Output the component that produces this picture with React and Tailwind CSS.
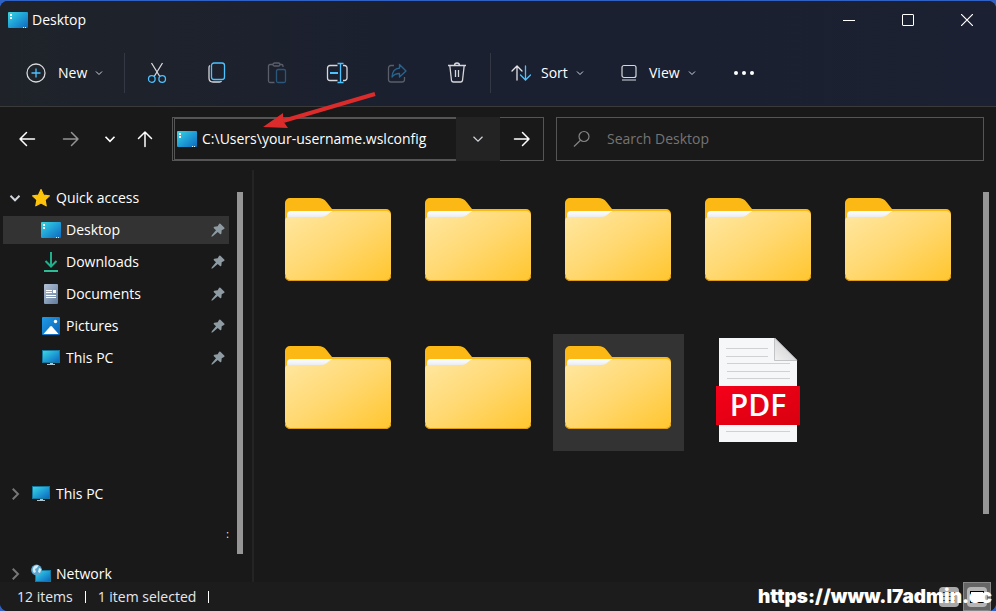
import React from 'react';

/* ---------- Icons ---------- */

function DesktopIcon() {
  return (
    <svg width="20" height="16" viewBox="0 0 20 16" className="shrink-0" aria-hidden="true">
      <defs>
        <linearGradient id="desk" x1="0" y1="0" x2="1" y2="1">
          <stop offset="0" stopColor="#3ad6e0" />
          <stop offset="0.5" stopColor="#1f9fd6" />
          <stop offset="1" stopColor="#0f68bd" />
        </linearGradient>
      </defs>
      <rect width="20" height="16" rx="1" fill="url(#desk)" />
      <path d="M2 2h2v2H2zM2 5h2v2H2z" fill="#fff" />
      <path d="M15 15h1v1h-1zM17 15h1v1h-1z" fill="#d5effa" />
    </svg>
  );
}

function PcIcon() {
  return (
    <svg width="20" height="18" viewBox="0 0 20 18" className="shrink-0" aria-hidden="true">
      <rect x="1" y="1" width="18" height="13" fill="#15779b" />
      <rect x="2" y="2" width="16" height="11" fill="url(#desk)" />
      <path d="M9 14h3v1h2v1H6v-1h3z" fill="#b9c3c9" />
    </svg>
  );
}

function StarIcon() {
  return (
    <svg width="20" height="20" viewBox="0 0 20 20" className="shrink-0" aria-hidden="true">
      <path
        d="M10 1.6 12.5 7l5.9.8-4.3 4.1 1.1 5.9L10 15l-5.2 2.8 1.1-5.9L1.6 7.8 7.5 7z"
        fill="#fdc40a"
        stroke="#fdc40a"
        strokeWidth="1.2"
        strokeLinejoin="round"
      />
    </svg>
  );
}

function DownloadIcon() {
  return (
    <svg width="20" height="20" viewBox="0 0 20 20" className="shrink-0" fill="none" strokeWidth="2" aria-hidden="true">
      <path d="M10 0v14M4.500 9 10 14.500 15.500 9" stroke="#22b08c" />
      <path d="M3 19h14" stroke="#2dbd94" />
    </svg>
  );
}

function DocumentIcon() {
  return (
    <svg width="20" height="20" viewBox="0 0 20 20" className="shrink-0" aria-hidden="true">
      <defs>
        <linearGradient id="doc" x1="0" y1="0" x2="1" y2="1">
          <stop offset="0" stopColor="#b4c2d6" />
          <stop offset="1" stopColor="#607b9d" />
        </linearGradient>
      </defs>
      <rect x="3" width="14" height="20" rx="1" fill="url(#doc)" />
      <path d="M5 6h6v1H5zM5 8h6v1H5zM12 6h3v3h-3zM5 11h10v1H5zM5 13h10v1H5z" fill="#fff" />
    </svg>
  );
}

function PictureIcon() {
  return (
    <svg width="20" height="20" viewBox="0 0 20 20" className="shrink-0" aria-hidden="true">
      <defs>
        <linearGradient id="pic" x1="0" y1="0" x2="1" y2="1">
          <stop offset="0" stopColor="#1f9be8" />
          <stop offset="1" stopColor="#0b62b5" />
        </linearGradient>
      </defs>
      <rect x="1" y="1" width="18" height="18" rx="1" fill="url(#pic)" />
      <path d="m2.500 18 6.700-7.600a1.200 1.200 0 0 1 1.700 0l6.700 7.600z" fill="#fff" />
      <circle cx="14.500" cy="5.500" r="1.700" fill="#fff" />
    </svg>
  );
}

function NetworkIcon() {
  return (
    <svg width="20" height="20" viewBox="0 0 20 20" className="shrink-0" aria-hidden="true">
      <rect x="4" y="6" width="16" height="12" fill="#15779b" />
      <rect x="5" y="7" width="14" height="10" fill="url(#desk)" />
      <path d="M11 18h2v2h-2z" fill="#c9d1d6" />
      <circle cx="5.500" cy="6" r="5.400" fill="#5aa6cf" />
      <path d="M2 4c1.500-3 4-3 5.500-2.500L6 4 4 5l1 3-2 1C1.500 7.500 1.500 5.500 2 4zM8 4l2.500 1L9 9 7 8z" fill="#d6edf8" />
    </svg>
  );
}

function PinIcon() {
  return (
    <svg width="14" height="14" viewBox="0 0 14 14" className="shrink-0" aria-hidden="true">
      <path d="M8 .9a.9.9 0 0 1 1.400-.1l3.800 3.800c.5.500.3 1.200-.2 1.400L10.700 7.300l-.3 3.200c-.1.700-.9 1-1.400.5L6.700 8.900 1.800 13.200.4 13.700l.4-1.400L5 7.300 2.900 5.200c-.5-.5-.2-1.300.5-1.400l3.300-.5z" fill="#8f9ba3" />
    </svg>
  );
}

function Chevron({ className = 'h-2 w-2', stroke = 1, d = 'M1 2.500 4 5.500 7 2.500' }) {
  return (
    <svg viewBox="0 0 8 8" className={`shrink-0 ${className}`} fill="none" stroke="currentColor" strokeWidth={stroke} aria-hidden="true">
      <path d={d} />
    </svg>
  );
}

function Arrow({ rotate = '' }) {
  return (
    <svg width="18" height="18" viewBox="0 0 18 18" className={rotate} fill="none" stroke="currentColor" strokeWidth="1.500" strokeLinecap="round" strokeLinejoin="round" aria-hidden="true">
      <path d="M2 9h14.500M8.500 2.500 2 9l6.500 6.500" />
    </svg>
  );
}

const tools = [
  {
    label: 'Cut',
    icon: (
      <>
        <path d="M5.500 1l8.300 13.500M16.500 1 8.200 14.500" stroke="#d6d8dc" />
        <circle cx="5.800" cy="17" r="3.300" stroke="#4cc2ff" />
        <circle cx="16.200" cy="17" r="3.300" stroke="#4cc2ff" />
      </>
    ),
  },
  {
    label: 'Copy',
    icon: (
      <>
        <path d="M4 3.500c-.8.500-1 1.200-1 2V16c0 2.500 1.500 4 4 4h6.500c1 0 1.700-.4 2-1" stroke="#d6d8dc" />
        <rect x="5.500" y="1" width="13" height="16.500" rx="2.500" stroke="#4cc2ff" />
      </>
    ),
  },
  {
    label: 'Paste',
    icon: (
      <>
        <path d="M7 2.500H4A1.500 1.500 0 0 0 2.500 4v15A1.500 1.500 0 0 0 4 20.500h4.500M13.500 2.500h2A1.500 1.500 0 0 1 17 4v1" stroke="#5a5e69" />
        <rect x="7" y="1" width="7" height="3" rx="1.500" stroke="#5a5e69" />
        <rect x="10.500" y="7.500" width="9" height="13" rx="1.500" stroke="#29587a" />
      </>
    ),
  },
  {
    label: 'Rename',
    icon: (
      <>
        <path d="M11.500 3.500H4A2.500 2.500 0 0 0 1.500 6v10A2.500 2.500 0 0 0 4 18.500h7.500M17 3.500h1.500A2.500 2.500 0 0 1 21 6v10a2.500 2.500 0 0 1-2.500 2.500H17" stroke="#d6d8dc" />
        <path d="M4 11h8" stroke="#4cc2ff" strokeWidth="2" />
        <path d="M14.500 1.500v19M11.500 1.500h6M11.500 20.500h6" stroke="#4cc2ff" />
      </>
    ),
  },
  {
    label: 'Share',
    icon: (
      <>
        <path d="M8 3.500H5A2.500 2.500 0 0 0 2.500 6v11.500A2.500 2.500 0 0 0 5 20h11a2.500 2.500 0 0 0 2.500-2.500V15" stroke="#5a5e69" />
        <path d="M13.500 2.500 20 9l-6.500 6v-3.500c-3.500 0-5.500.8-7.500 3.500.3-5 3-8.500 7.500-8.800z" stroke="#29648c" strokeLinejoin="round" />
      </>
    ),
  },
  {
    label: 'Delete',
    icon: (
      <>
        <path d="M2 3.500h18M3.800 3.500 5.500 18.500A2 2 0 0 0 7.500 20h7a2 2 0 0 0 2-1.500L18.200 3.500M8.500 3.500a2.500 2.500 0 0 1 5 0M9.500 8v7M12.500 8v7" stroke="#d6d8dc" />
      </>
    ),
  },
];

function Folder() {
  return (
    <svg width="106" height="84" viewBox="0 0 106 84" aria-hidden="true">
      <defs>
        <linearGradient id="front" x1="0" y1="0" x2="1" y2="1">
          <stop offset="0" stopColor="#ffe8a3" />
          <stop offset="0.5" stopColor="#ffd870" />
          <stop offset="1" stopColor="#ffc62f" />
        </linearGradient>
        <linearGradient id="paper" x1="0" y1="0" x2="0" y2="1">
          <stop offset="0" stopColor="#ffffff" />
          <stop offset="1" stopColor="#dfe3ea" />
        </linearGradient>
      </defs>
      <path d="M0 5a5 5 0 0 1 5-5h28c4 0 6 1 8.500 4L47 11h54a5 5 0 0 1 5 5v61a5 5 0 0 1-5 6H5a5 5 0 0 1-5-6z" fill="#fcb916" />
      <path d="M2 22v-5a4 4 0 0 1 4-4h42l-8 8z" fill="url(#paper)" />
      <path d="M0 23a4 4 0 0 1 4-4h32c3 0 5-1 7-3s4-3 7-3h51a5 5 0 0 1 5 5v59a5 5 0 0 1-5 5H5a5 5 0 0 1-5-5z" fill="url(#front)" />
      <path d="M.5 76.500A5 5 0 0 0 5 82.500h96a5 5 0 0 0 4.500-6" fill="none" stroke="#dd9d16" />
    </svg>
  );
}

function PdfFile() {
  return (
    <svg width="84" height="107" viewBox="0 0 84 107" aria-hidden="true">
      <defs>
        <linearGradient id="fold" x1="0" y1="1" x2="1" y2="0">
          <stop offset="0" stopColor="#f2f2f3" />
          <stop offset="1" stopColor="#c5c6c8" />
        </linearGradient>
        <linearGradient id="band" x1="0" y1="0" x2="1" y2="1">
          <stop offset="0" stopColor="#f5001a" />
          <stop offset="1" stopColor="#d8000f" />
        </linearGradient>
      </defs>
      <path d="M3 1h56l22 22v82H3z" fill="#f6f7f8" />
      <path d="M58.500 1v22.500H81z" fill="url(#fold)" stroke="#aeb0b3" strokeWidth="0.700" />
      <path d="M10 11.500h42M10 19.500h42M11 26.500h63M11 34.500h63M11 41.500h63M10 94.500h64" stroke="#cfd1d3" />
      <path d="M0 49h84v39H0z" fill="url(#band)" />
      <text x="42" y="79" textAnchor="middle" fill="#fff" fontSize="30" fontWeight="600" fontFamily="'Open Sans', 'Noto Sans', sans-serif">
        PDF
      </text>
    </svg>
  );
}

/* ---------- Data ---------- */

const quickAccess = [
  { name: 'Desktop', Icon: DesktopIcon, active: true },
  { name: 'Downloads', Icon: DownloadIcon },
  { name: 'Documents', Icon: DocumentIcon },
  { name: 'Pictures', Icon: PictureIcon },
  { name: 'This PC', Icon: PcIcon },
];

const files = [
  { type: 'folder' },
  { type: 'folder' },
  { type: 'folder' },
  { type: 'folder' },
  { type: 'folder' },
  { type: 'folder' },
  { type: 'folder' },
  { type: 'folder', selected: true },
  { type: 'pdf' },
];

/* ---------- Sections ---------- */

function TitleBar() {
  return (
    <div className="flex h-[38px] items-center justify-between pl-2">
      <div className="flex items-center gap-1">
        <DesktopIcon />
        <h1>Desktop</h1>
      </div>
      <div className="flex h-full">
        <button aria-label="Minimize" className="flex w-[59px] items-center justify-center">
          <span className="h-px w-3 bg-white"></span>
        </button>
        <button aria-label="Maximize" className="flex w-[59px] items-center justify-center">
          <span className="size-3 rounded-[1px] border border-white"></span>
        </button>
        <button aria-label="Close" className="flex w-[59px] items-center justify-center">
          <svg width="12" height="12" viewBox="0 0 12 12" stroke="#fff" strokeWidth="1.200" aria-hidden="true">
            <path d="m0 0 12 12M12 0 0 12" />
          </svg>
        </button>
      </div>
    </div>
  );
}

function Toolbar() {
  return (
    <div className="flex h-[67px] items-center font-medium">
      <button className="flex h-10 w-[124px] items-center pl-[26px]">
        <svg width="20" height="20" viewBox="0 0 20 20" fill="none" strokeWidth="1.300" className="mr-3" aria-hidden="true">
          <circle cx="10" cy="10" r="9" stroke="#d6d8dc" />
          <path d="M10 5.500v9M5.500 10h9" stroke="#4cc2ff" />
        </svg>
        New
        <Chevron className="ml-2 h-2 w-2 text-gray-300" />
      </button>
      <span className="mr-0.5 h-10 w-px bg-[#343844]"></span>
      {tools.map((tool) => (
        <button key={tool.label} aria-label={tool.label} className="flex h-10 w-[60px] items-center justify-center">
          <svg width="22" height="22" viewBox="0 0 22 22" fill="none" strokeWidth="1.300" aria-hidden="true">
            {tool.icon}
          </svg>
        </button>
      ))}
      <span className="ml-[3px] h-10 w-px bg-[#343844]"></span>
      <button className="flex h-10 w-[108px] items-center pl-5">
        <svg width="20" height="20" viewBox="0 0 20 20" fill="none" strokeWidth="1.300" strokeLinecap="round" className="mr-2.5" aria-hidden="true">
          <path d="M6 17V3M1 8l5-5 5 5" stroke="#e2e4e8" />
          <path d="M14.500 3v14M9.500 12l5 5 5-5" stroke="#4cc2ff" />
        </svg>
        Sort
        <Chevron className="ml-2 h-2 w-2 text-gray-300" />
      </button>
      <button className="flex h-10 w-[112px] items-center pl-5">
        <svg width="20" height="20" viewBox="0 0 20 20" fill="none" strokeWidth="1.200" stroke="#d6d8dc" className="mr-2.5" aria-hidden="true">
          <rect x="3" y="2.500" width="14" height="12" rx="2" />
          <path d="M3 17h14" />
        </svg>
        View
        <Chevron className="ml-2 h-2 w-2 text-gray-300" />
      </button>
      <button aria-label="More" className="flex h-10 w-[66px] items-center justify-center gap-1">
        <span className="size-1 rounded-full bg-white"></span>
        <span className="size-1 rounded-full bg-white"></span>
        <span className="size-1 rounded-full bg-white"></span>
      </button>
    </div>
  );
}

function AddressRow() {
  return (
    <div className="flex h-16 items-center border-t border-[#3a3a3a] pr-3">
      <nav className="flex w-[172px] shrink-0 items-center pl-[18px]">
        <button aria-label="Back" className="w-[44px]"><Arrow /></button>
        <button aria-label="Forward" className="w-[42px] text-[#949494]"><Arrow rotate="rotate-180" /></button>
        <button aria-label="Recent" className="w-8"><Chevron className="h-3 w-3" stroke={1.1} /></button>
        <button aria-label="Up"><Arrow rotate="rotate-90" /></button>
      </nav>
      <form className="grid min-w-0 flex-1 grid-cols-[93fr_107fr] gap-3" onSubmit={(e) => e.preventDefault()}>
        <div className="relative flex h-11 min-w-0 border border-[#555555]">
          <label className="-my-px ml-px flex min-w-0 flex-1 items-center gap-1 border-y-2 border-l border-[#555555] pl-0.5">
            <DesktopIcon />
            <input
              aria-label="Address"
              type="text"
              defaultValue="C:\Users\your-username.wslconfig"
              className="w-full min-w-0 bg-transparent pl-px outline-none"
            />
          </label>
          <button type="button" aria-label="History" className="-my-px flex w-11 items-center justify-center bg-[#232323] text-gray-300">
            <Chevron className="h-3 w-3" stroke={0.8} />
          </button>
          <button type="submit" aria-label="Go" className="flex w-[43px] items-center justify-center">
            <Arrow rotate="rotate-180" />
          </button>
          {/* Pointer towards the path */}
          <svg width="116" height="40" viewBox="0 0 116 40" className="pointer-events-none absolute -top-7 left-[90px]" aria-hidden="true">
            <path d="M112 4 20 31" stroke="#dc2b2b" strokeWidth="4" />
            <path d="M0 37 20 23v8l5 7z" fill="#dc2b2b" />
          </svg>
        </div>
        <label className="flex h-11 min-w-0 items-center gap-4 border border-[#555555] pl-4">
          <svg width="18" height="18" viewBox="0 0 18 18" fill="none" stroke="#858585" strokeWidth="1.200" className="shrink-0" aria-hidden="true">
            <circle cx="11" cy="6.500" r="5" />
            <path d="M7.500 10.200 1 16.500" />
          </svg>
          <input
            aria-label="Search Desktop"
            type="search"
            placeholder="Search Desktop"
            className="w-full min-w-0 bg-transparent outline-none placeholder:text-[#747474]"
          />
        </label>
      </form>
    </div>
  );
}

function Sidebar() {
  return (
    <aside className="flex w-[254px] shrink-0 overflow-hidden border-r-2 border-[#242424]">
      <div className="ml-[3px] flex w-[226px] flex-col overflow-hidden pt-3">
        <a href="#quick" className="flex h-8 shrink-0 items-center pl-1.5">
          <Chevron className="mr-2.5 h-3 w-3 text-gray-300" stroke={1.3} />
          <StarIcon />
          <span className="ml-[5px]">Quick access</span>
        </a>
        <ul>
          {quickAccess.map(({ name, Icon, active }) => (
            <li key={name} className="flex h-8 items-center">
              <a
                href={`#${name}`}
                className={`flex h-7 w-full items-center gap-1 pr-1 pl-[38px] ${active ? 'bg-[#333333]' : ''}`}
              >
                <Icon />
                <span className="flex-1 pl-px">{name}</span>
                <PinIcon />
              </a>
            </li>
          ))}
        </ul>
        <a href="#pc" className="mt-[104px] flex h-8 shrink-0 items-center pl-1.5">
          <Chevron className="mr-2.5 h-3 w-3 text-[#777777]" stroke={1.3} d="M2.500 0.500 6 4 2.500 7.500" />
          <PcIcon />
          <span className="ml-[5px]">This PC</span>
        </a>
        <span className="mt-2 h-8 shrink-0 self-end text-[10px] leading-8">:</span>
        <a href="#network" className="mt-2 flex h-8 shrink-0 items-center pl-1.5">
          <Chevron className="mr-2.5 h-3 w-3 text-[#777777]" stroke={1.3} d="M2.500 0.500 6 4 2.500 7.500" />
          <NetworkIcon />
          <span className="ml-[5px]">Network</span>
        </a>
      </div>
      <span className="mt-[22px] mb-7 ml-2 w-1.5 bg-[#969696]"></span>
    </aside>
  );
}

function FileGrid() {
  return (
    <main className="flex min-w-0 flex-1 justify-between pr-[7px] pl-[19px]">
      <ul className="grid flex-1 grid-cols-[repeat(auto-fill,131px)] content-start gap-x-[9px] gap-y-[31px] pt-4">
        {files.map((file, i) => (
          <li
            key={i}
            className={`flex h-[117px] pl-3 ${file.selected ? 'bg-[#333333]' : ''} ${file.type === 'pdf' ? 'pt-[3px] pl-[23px]' : 'pt-3 pl-3'}`}
          >
            {file.type === 'pdf' ? <PdfFile /> : <Folder />}
          </li>
        ))}
      </ul>
      <span className="mt-[22px] mb-[68px] w-1.5 bg-[#969696]"></span>
    </main>
  );
}

function StatusBar() {
  return (
    <footer className="relative flex h-[29px] shrink-0 items-center bg-[#1c1c1c] pl-[17px] text-gray-200">
      <span className="border-r border-white pr-3 leading-3">12 items</span>
      <span className="border-r border-white px-3 leading-3">1 item selected</span>
      <div className="ml-auto flex h-full items-center gap-1 pr-[5px]">
        <button aria-label="Details view" className="flex size-5 flex-col items-center justify-center gap-[3px] rounded-sm bg-[#a9a9a9]">
          <span className="h-px w-3 bg-[#222222]"></span>
          <span className="h-px w-3 bg-[#222222]"></span>
          <span className="h-px w-3 bg-[#222222]"></span>
        </button>
        <button aria-label="Large icons view" className="flex h-full w-7 items-center justify-center border border-[#888888] bg-[#666666]">
          <span className="flex size-5 items-center justify-center rounded-sm bg-[#b5b5b5]">
            <span className="h-3 w-3.5 border border-black bg-white"></span>
          </span>
        </button>
      </div>
      <p className="absolute right-1 bottom-1 font-[Inter,sans-serif] text-[19px] leading-5 font-black text-white">
        https://www.l7admin.cc
      </p>
    </footer>
  );
}

export default function App() {
  return (
    <div className="h-screen bg-[#2f62c4] pt-px font-['Open_Sans','Noto_Sans',sans-serif] text-sm text-white">
      <div className="flex h-full flex-col overflow-hidden rounded-t-lg rounded-b-lg bg-[#191919]">
        <header className="shrink-0 bg-linear-to-r from-[#1f2329] via-[#1b2030] via-40% to-[#1b2032]">
          <TitleBar />
          <Toolbar />
        </header>
        <AddressRow />
        <div className="flex min-h-0 flex-1">
          <Sidebar />
          <FileGrid />
        </div>
        <StatusBar />
      </div>
    </div>
  );
}
